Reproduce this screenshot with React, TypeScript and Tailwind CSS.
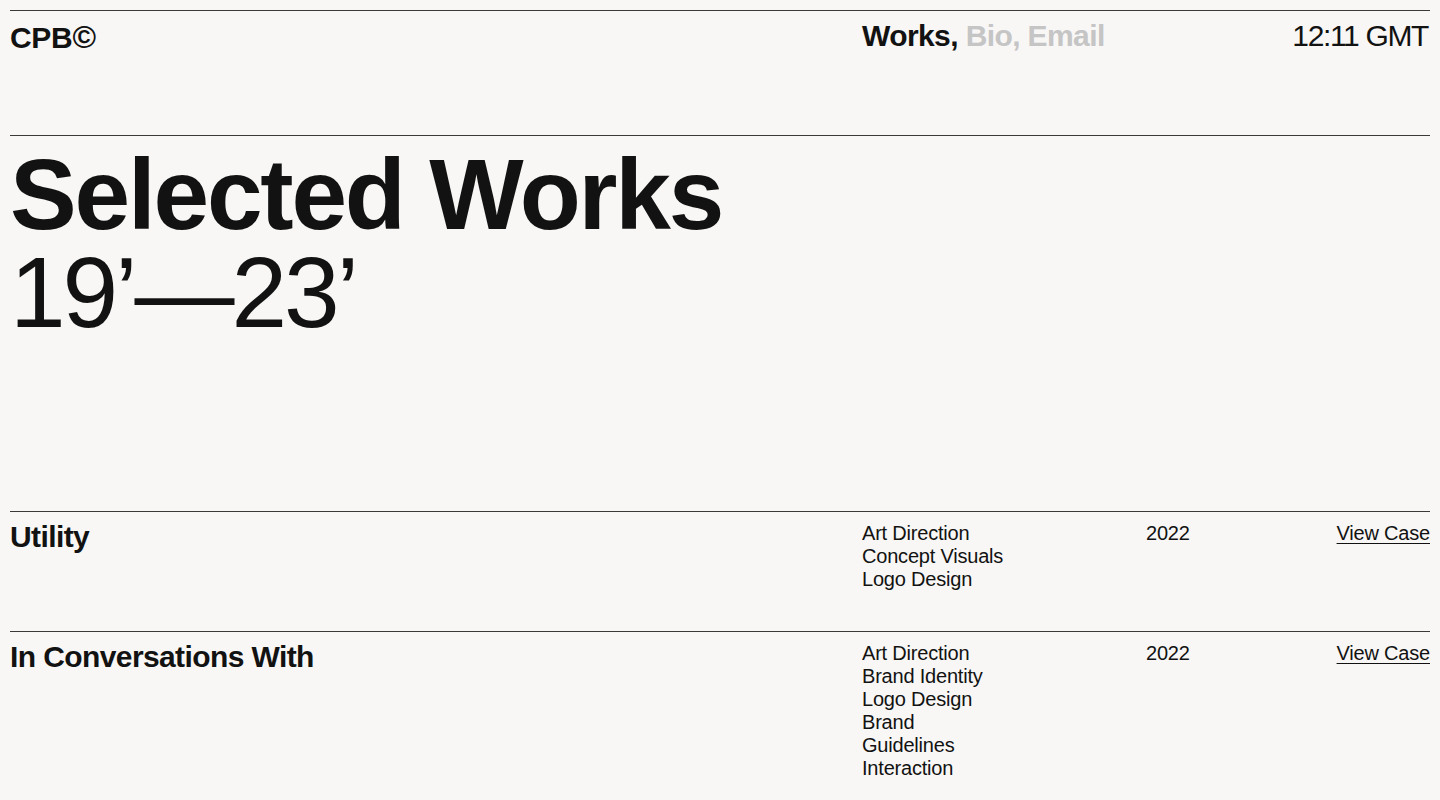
import React from "react";

const font = { fontFamily: '"Liberation Sans", Arial, sans-serif' };

const works = [
  {
    title: "Utility",
    services: ["Art Direction", "Concept Visuals", "Logo Design"],
    year: "2022",
  },
  {
    title: "In Conversations With",
    services: ["Art Direction", "Brand Identity", "Logo Design", "Brand", "Guidelines", "Interaction"],
    year: "2022",
  },
];

export default function App() {
  return (
    <div className="min-h-screen bg-[#f8f7f5] text-[#121212] px-[10px] pt-[10px]" style={font}>
      {/* header */}
      <header className="grid grid-cols-5 h-[125px] border-t border-[#3a3a3a] pt-[10px]">
        <div className="col-span-3 text-[30px] leading-none font-bold tracking-[-0.01em]">
          CPB<span className="text-[32px]">©</span>
        </div>
        <nav className="text-[30px] leading-none font-bold tracking-[-0.02em]">
          Works, <span className="text-[#c5c5c5]">Bio, Email</span>
        </nav>
        <div className="text-right pr-[2px] text-[30px] leading-none tracking-[-0.045em]">12:11 GMT</div>
      </header>

      {/* hero */}
      <section className="h-[376px] border-t border-[#3a3a3a] pt-[9px]">
        <h1 className="text-[100px] leading-[98px]">
          <span className="font-bold tracking-[-0.022em]">Selected Works</span>
          <br />
          <span className="font-normal tracking-[-0.03em]">19’—23’</span>
        </h1>
      </section>

      {/* list */}
      {works.map((w) => (
        <div key={w.title} className="grid grid-cols-5 border-t border-[#3a3a3a] pt-[10px] pb-[40px]">
          <div className="col-span-3 text-[30px] leading-none font-bold tracking-[-0.02em]">{w.title}</div>
          <ul className="text-[20px] leading-[23px] tracking-[-0.01em]">
            {w.services.map((s) => (
              <li key={s}>{s}</li>
            ))}
          </ul>
          <div className="flex justify-between text-[20px] leading-[23px] tracking-[-0.01em]">
            <span>{w.year}</span>
            <a href="#" className="underline underline-offset-[3px] decoration-1">View Case</a>
          </div>
        </div>
      ))}
    </div>
  );
}
